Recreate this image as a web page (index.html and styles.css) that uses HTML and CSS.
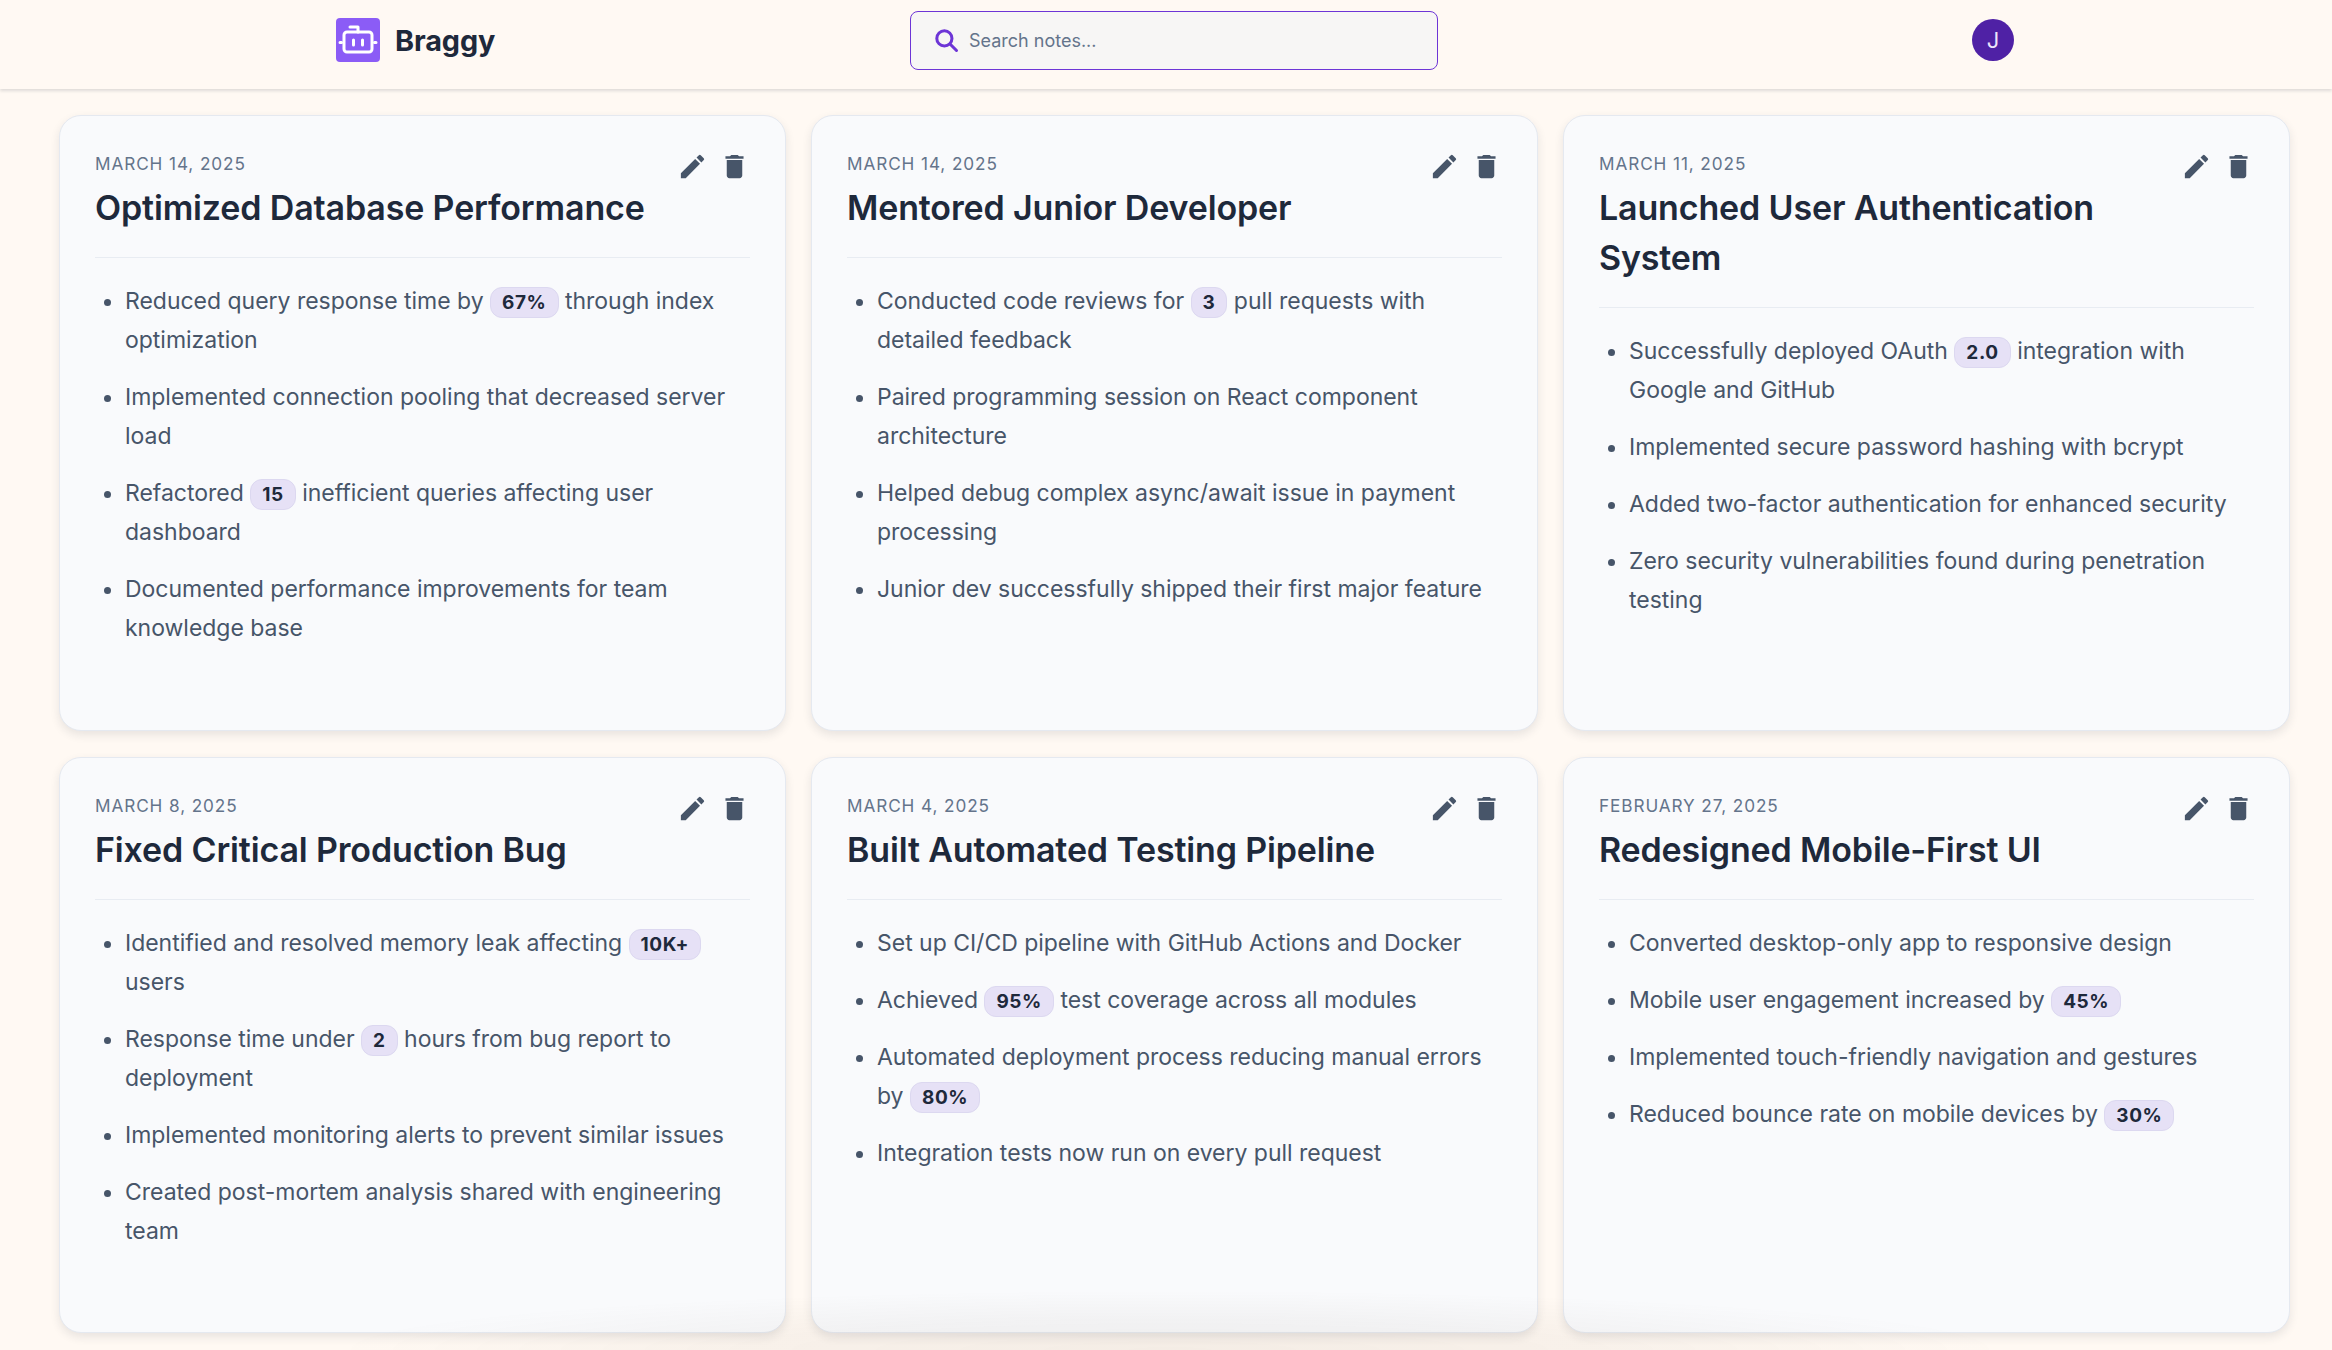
FILE: index.html
```html
<!DOCTYPE html>
<html lang="en">
<head>
<meta charset="utf-8">
<title>Braggy</title>
<link rel="stylesheet" href="styles.css">
</head>
<body>
<svg class="defs" width="0" height="0" aria-hidden="true">
  <symbol id="i-edit" viewBox="0 0 24 24"><path d="M3 17.25V21h3.75L17.81 9.94l-3.75-3.75L3 17.25zM20.71 7.04a1 1 0 0 0 0-1.41l-2.34-2.34a1 1 0 0 0-1.41 0l-1.83 1.83 3.75 3.75 1.83-1.83z"/></symbol>
  <symbol id="i-trash" viewBox="0 0 24 24"><path d="M6 19c0 1.1.9 2 2 2h8c1.1 0 2-.9 2-2V7H6v12zM19 4h-3.5l-1-1h-5l-1 1H5v2h14V4z"/></symbol>
</svg>
<header class="topbar">
  <div class="brand">
    <span class="logo">
      <svg viewBox="0 0 44 44" width="44" height="44"><rect width="44" height="44" rx="4" fill="#8b5cf6"/><g fill="none" stroke="#fff" stroke-width="3" stroke-linecap="round" stroke-linejoin="round"><rect x="8" y="14" width="28" height="20" rx="3"/><path d="M22 14V9h-8"/><path d="M4 24.500h1.500M38.500 24.500h1.500"/><path d="M17.500 22v5M26.500 22v5"/></g></svg>
    </span>
    <span class="brand-name">Braggy</span>
  </div>
  <label class="search">
    <svg class="search-icon" viewBox="0 0 24 24" width="26" height="26"><circle cx="10.500" cy="10.500" r="7" fill="none" stroke="#6d35d6" stroke-width="2.800"/><path d="M15.700 15.700l6 6" stroke="#6d35d6" stroke-width="2.800" stroke-linecap="round"/></svg>
    <input class="search-input" type="text" placeholder="Search notes...">
  </label>
  <div class="user"><span class="avatar">J</span></div>
</header>
<main class="grid">
  <article class="card">
    <div class="card-actions"><svg class="act"><use href="#i-edit"/></svg><svg class="act"><use href="#i-trash"/></svg></div>
    <div class="date">March 14, 2025</div>
    <h2 class="title">Optimized Database Performance</h2>
    <ul class="points">
      <li>Reduced query response time by <b class="tag">67%</b> through index optimization</li>
      <li>Implemented connection pooling that decreased server load</li>
      <li>Refactored <b class="tag">15</b> inefficient queries affecting user dashboard</li>
      <li>Documented performance improvements for team knowledge base</li>
    </ul>
  </article>
  <article class="card">
    <div class="card-actions"><svg class="act"><use href="#i-edit"/></svg><svg class="act"><use href="#i-trash"/></svg></div>
    <div class="date">March 14, 2025</div>
    <h2 class="title">Mentored Junior Developer</h2>
    <ul class="points">
      <li>Conducted code reviews for <b class="tag">3</b> pull requests with detailed feedback</li>
      <li>Paired programming session on React component architecture</li>
      <li>Helped debug complex async/await issue in payment processing</li>
      <li>Junior dev successfully shipped their first major feature</li>
    </ul>
  </article>
  <article class="card">
    <div class="card-actions"><svg class="act"><use href="#i-edit"/></svg><svg class="act"><use href="#i-trash"/></svg></div>
    <div class="date">March 11, 2025</div>
    <h2 class="title">Launched User Authentication System</h2>
    <ul class="points">
      <li>Successfully deployed OAuth <b class="tag">2.0</b> integration with Google and GitHub</li>
      <li>Implemented secure password hashing with bcrypt</li>
      <li>Added two-factor authentication for enhanced security</li>
      <li>Zero security vulnerabilities found during penetration testing</li>
    </ul>
  </article>
  <article class="card">
    <div class="card-actions"><svg class="act"><use href="#i-edit"/></svg><svg class="act"><use href="#i-trash"/></svg></div>
    <div class="date">March 8, 2025</div>
    <h2 class="title">Fixed Critical Production Bug</h2>
    <ul class="points">
      <li>Identified and resolved memory leak affecting <b class="tag">10K+</b> users</li>
      <li>Response time under <b class="tag">2</b> hours from bug report to deployment</li>
      <li>Implemented monitoring alerts to prevent similar issues</li>
      <li>Created post-mortem analysis shared with engineering team</li>
    </ul>
  </article>
  <article class="card">
    <div class="card-actions"><svg class="act"><use href="#i-edit"/></svg><svg class="act"><use href="#i-trash"/></svg></div>
    <div class="date">March 4, 2025</div>
    <h2 class="title">Built Automated Testing Pipeline</h2>
    <ul class="points">
      <li>Set up CI/CD pipeline with GitHub Actions and Docker</li>
      <li>Achieved <b class="tag">95%</b> test coverage across all modules</li>
      <li>Automated deployment process reducing manual errors by <b class="tag">80%</b></li>
      <li>Integration tests now run on every pull request</li>
    </ul>
  </article>
  <article class="card">
    <div class="card-actions"><svg class="act"><use href="#i-edit"/></svg><svg class="act"><use href="#i-trash"/></svg></div>
    <div class="date">February 27, 2025</div>
    <h2 class="title">Redesigned Mobile-First UI</h2>
    <ul class="points">
      <li>Converted desktop-only app to responsive design</li>
      <li>Mobile user engagement increased by <b class="tag">45%</b></li>
      <li>Implemented touch-friendly navigation and gestures</li>
      <li>Reduced bounce rate on mobile devices by <b class="tag">30%</b></li>
    </ul>
  </article>
</main>
<div class="bottom-glow"></div>
</body>
</html>
```
FILE: styles.css
```css
* { box-sizing: border-box; }
html, body { margin: 0; height: 100%; }
body {
  height: 1350px;
  overflow: hidden;
  background: #fff9f3;
  font-family: Inter, "Liberation Sans", sans-serif;
  color: #1e293b;
}
.defs { display: block; height: 0; }
.topbar {
  height: 89px;
  padding-bottom: 9px;
  display: grid;
  grid-template-columns: 910px 528px 1fr;
  align-items: center;
  background: #fff9f3;
  box-shadow: 0 2px 3px rgba(30, 41, 59, 0.14);
  position: relative;
}
.brand { display: flex; align-items: center; gap: 15px; padding-left: 336px; }
.logo { display: block; width: 44px; height: 44px; }
.logo svg { display: block; }
.brand-name { font-size: 28.8px; font-weight: 700; color: #1e293b; letter-spacing: -0.1px; }
.search {
  display: flex;
  align-items: center;
  gap: 10px;
  height: 59px;
  padding: 0 21px 0 22px;
  background: #f7f6f5;
  border: 1px solid #6d35d6;
  border-radius: 8px;
}
.search-icon { flex: none; }
.search-input {
  flex: 1;
  border: 0;
  background: transparent;
  outline: 0;
  font: 400 18px Inter, "Liberation Sans", sans-serif;
  color: #1e293b;
  padding: 0;
}
.search-input::placeholder { color: #64748b; opacity: 1; }
.user { padding-left: 534px; display: flex; }
.avatar {
  width: 42px;
  height: 42px;
  border-radius: 50%;
  background: #4f21a5;
  color: #eee5fb;
  display: flex;
  align-items: center;
  justify-content: center;
  font-size: 22px;
}
.grid {
  display: grid;
  grid-template-columns: repeat(3, 1fr);
  grid-template-rows: 616px 576px;
  gap: 26px 25px;
  padding: 26px 42px 0 59px;
}
.card {
  position: relative;
  background: #f9fafc;
  border: 1px solid #e5e9f0;
  border-radius: 22px;
  padding: 36px 35px 0 35px;
  box-shadow: 0 4px 10px rgba(30, 41, 59, 0.1);
  min-width: 0;
}
.card-actions {
  position: absolute;
  top: 35px;
  right: 35px;
  display: flex;
  gap: 11px;
}
.act { width: 31px; height: 31px; fill: #475569; display: block; }
.date {
  font-size: 17.2px;
  line-height: 24px;
  letter-spacing: 0.9px;
  color: #64748b;
  text-transform: uppercase;
}
.title {
  margin: 7px 0 0;
  padding-bottom: 24px;
  border-bottom: 1px solid #e8ecf2;
  font-size: 34px;
  line-height: 50px;
  font-weight: 600;
  color: #1e293b;
  letter-spacing: -0.15px;
  padding-right: 40px;
}
.points {
  margin: 24px 0 0;
  padding: 0 0 0 30px;
  list-style: disc;
  color: #475569;
  font-size: 23px;
  line-height: 39px;
  letter-spacing: -0.02px;
}
.points li { margin-bottom: 18px; }
.tag {
  display: inline-block;
  padding: 0 11px;
  margin: 0;
  border: 1px solid #dcd8f0;
  border-radius: 12px;
  background: #e6e1f6;
  color: #1e293b;
  font-size: 19px;
  line-height: 29px;
  font-weight: 700;
  vertical-align: baseline;
  letter-spacing: 0.6px;
}
.bottom-glow {
  position: fixed;
  left: 330px;
  width: 1680px;
  bottom: 0;
  height: 60px;
  background: radial-gradient(ellipse 50% 100% at 50% 100%, rgba(70, 45, 20, 0.06), rgba(70, 45, 20, 0.04) 50%, transparent 100%);
  pointer-events: none;
}
```
